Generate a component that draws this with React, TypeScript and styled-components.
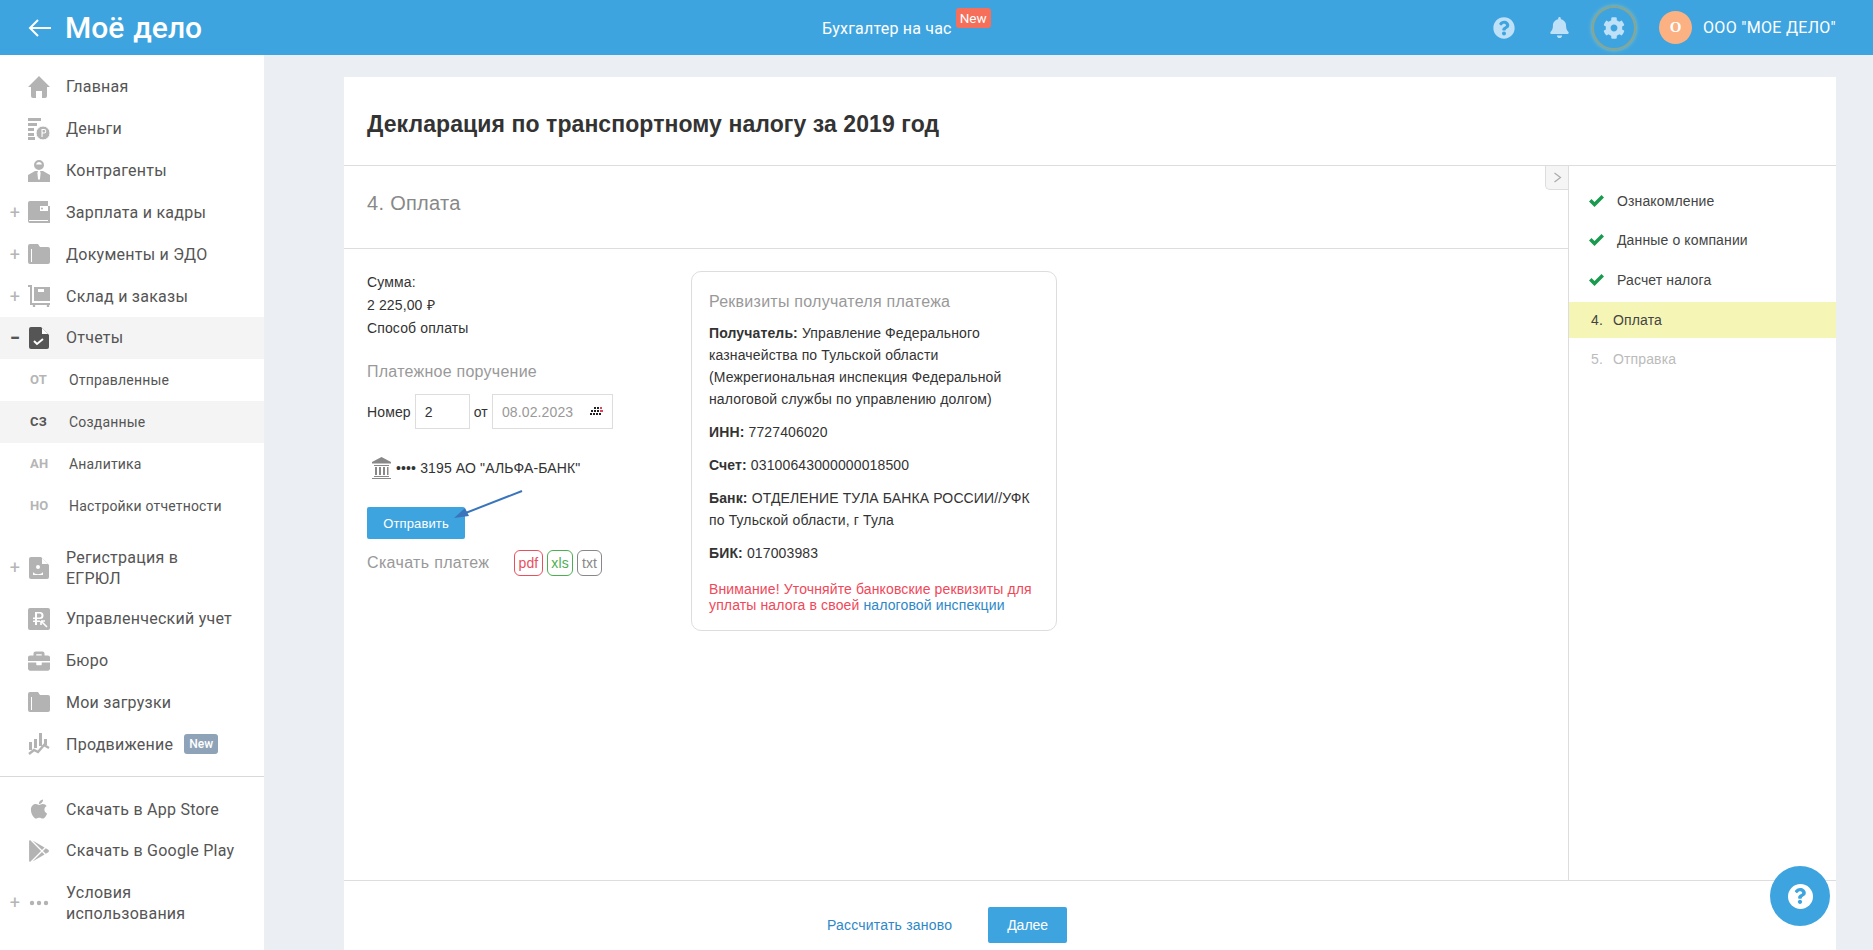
import React from 'react';
import styled, { createGlobalStyle, css } from 'styled-components';
import {
  FaApple,
  FaBell,
  FaBriefcase,
  FaCog,
  FaGooglePlay,
  FaQuestion,
  FaQuestionCircle,
} from 'react-icons/fa';

const GlobalStyle = createGlobalStyle`
  html, body {
    margin: 0;
    height: 100%;
    overflow: hidden;
    background: #ebeff3;
    font-family: 'Liberation Sans', Arial, sans-serif;
  }
`;

const Page = styled.div`
  width: 1873px;
  height: 950px;
  overflow: hidden;
  position: relative;
  display: flex;
  flex-direction: column;
`;

// шапка
const Header = styled.header`
  height: 55px;
  flex: none;
  background: #3ea4e0;
  display: flex;
  align-items: center;
  color: #fff;
  font-family: Roboto, sans-serif;
`;

const Brand = styled.div`
  width: 822px;
  flex: none;
  display: flex;
  align-items: center;
  padding-left: 28px;
  box-sizing: border-box;
  gap: 14px;
`;

const Logo = styled.span`
  font-size: 30px;
  line-height: 31px;
  font-weight: 500;
  white-space: nowrap;
`;

const LogoSmall = styled.span`
  margin-left: 9px;
`;

const Center = styled.div`
  display: flex;
  align-items: flex-start;
  gap: 4px;
  font-size: 16px;
  line-height: 19px;
  letter-spacing: 0.2px;
`;

const CenterLabel = styled.span`
  margin-top: 1px;
`;

const NewBadge = styled.span`
  background: #f56f5a;
  border-radius: 3px;
  font-size: 13.5px;
  line-height: 20px;
  padding: 0 4px;
  margin-top: -10px;
  letter-spacing: 0;
`;

const HeaderRight = styled.div`
  margin-left: auto;
  display: flex;
  align-items: center;
  padding-right: 37px;
`;

const HeaderIcon = styled.span<{ $ring?: boolean }>`
  width: 44px;
  height: 44px;
  margin-left: 11px;
  display: flex;
  align-items: center;
  justify-content: center;
  border-radius: 50%;
  box-sizing: border-box;
  color: #bfe1f7;
  font-size: 22px;
  ${(p) =>
    p.$ring &&
    css`
      border: 2px solid #8aa690;
      box-shadow: 0 0 4px rgba(240, 220, 110, 0.6);
    `}
`;

const Avatar = styled.span`
  width: 33px;
  height: 33px;
  margin-left: 23px;
  border-radius: 50%;
  background: #fbb182;
  display: flex;
  align-items: center;
  justify-content: center;
  font-family: 'Liberation Serif', serif;
  font-weight: 700;
  font-size: 15px;
`;

const CompanyName = styled.span`
  margin-left: 11px;
  font-size: 16px;
  letter-spacing: 0.3px;
  white-space: nowrap;
`;

const Body = styled.div`
  flex: 1;
  min-height: 0;
  display: flex;
`;

// боковое меню
const Sidebar = styled.nav`
  width: 264px;
  flex: none;
  background: #fff;
  padding-top: 11px;
  box-sizing: border-box;
  font-family: Roboto, sans-serif;
`;

const NavRow = styled.div<{ $active?: boolean; $tall?: boolean }>`
  min-height: 41.83px;
  display: flex;
  align-items: center;
  font-size: 16px;
  line-height: 21px;
  letter-spacing: 0.25px;
  color: #555;
  ${(p) => p.$active && 'background: #f4f4f4;'}
  ${(p) => p.$tall && 'padding: 10px 0 9px;'}
`;

const Toggle = styled.span<{ $active?: boolean }>`
  width: 28px;
  flex: none;
  text-align: center;
  padding-left: 2px;
  box-sizing: border-box;
  font-size: 18px;
  font-weight: ${(p) => (p.$active ? 900 : 400)};
  color: ${(p) => (p.$active ? '#555' : '#b5b5b5')};
`;

const NavIcon = styled.span<{ $active?: boolean }>`
  width: 22px;
  height: 22px;
  flex: none;
  margin-right: 16px;
  display: flex;
  align-items: center;
  justify-content: center;
  font-size: 22px;
  color: ${(p) => (p.$active ? '#555' : '#b3b3b3')};
  svg {
    display: block;
  }
`;

const SubRow = styled.div<{ $active?: boolean }>`
  height: 42px;
  display: flex;
  align-items: center;
  font-size: 14px;
  letter-spacing: 0.18px;
  color: #555;
  ${(p) => p.$active && 'background: #f4f4f4;'}
`;

const SubCode = styled.span<{ $active?: boolean }>`
  width: 39px;
  flex: none;
  padding-left: 30px;
  box-sizing: content-box;
  font-size: 13px;
  font-weight: 700;
  color: ${(p) => (p.$active ? '#555' : '#b5b5b5')};
`;

const SideGap = styled.div`
  height: 10px;
`;

const NavNew = styled.span`
  margin-left: 11px;
  background: #8fa3b8;
  color: #fff;
  font-size: 12px;
  font-weight: 500;
  line-height: 20px;
  letter-spacing: 0;
  padding: 0 5px;
  border-radius: 3px;
`;

const SideDivider = styled.div`
  height: 1px;
  background: #d9d9d9;
  margin: 11px 0 11px;
`;

// основная панель
const Main = styled.main`
  flex: 1;
  min-width: 0;
  padding: 22px 37px 0 80px;
`;

const Panel = styled.div`
  background: #fff;
  height: 893px;
  display: flex;
  flex-direction: column;
`;

const TitleBar = styled.div`
  height: 89px;
  flex: none;
  box-sizing: border-box;
  border-bottom: 1px solid #ddd;
  display: flex;
  align-items: center;
  padding: 6px 23px 0;
`;

const Title = styled.h1`
  margin: 0;
  font-size: 23px;
  font-weight: 700;
  letter-spacing: 0.08px;
  color: #333;
`;

const Columns = styled.div`
  flex: 1;
  min-height: 0;
  display: flex;
`;

const Wizard = styled.section`
  flex: 1;
  min-width: 0;
  position: relative;
  border-right: 1px solid #ddd;
`;

const CollapseTab = styled.span`
  position: absolute;
  top: 0;
  right: 0;
  width: 22px;
  height: 23px;
  background: #f5f5f5;
  border: 1px solid #ddd;
  border-top: 0;
  border-right: 0;
  border-radius: 0 0 0 5px;
  display: flex;
  align-items: center;
  justify-content: center;
`;

const StepHeading = styled.div`
  height: 83px;
  box-sizing: border-box;
  border-bottom: 1px solid #ddd;
  padding: 25px 0 0 23px;
  font-size: 20px;
  line-height: 24px;
  letter-spacing: 0.3px;
  color: #888;
`;

const StepBody = styled.div`
  display: flex;
  padding: 22px 0 0 23px;
  align-items: flex-start;
  position: relative;
`;

const PayColumn = styled.div`
  width: 324px;
  flex: none;
  font-size: 14px;
  letter-spacing: 0.13px;
  color: #333;
`;

const PayLine = styled.div`
  line-height: 23px;
`;

const SectionLabel = styled.div`
  margin-top: 21px;
  font-size: 16px;
  line-height: 22px;
  letter-spacing: 0.25px;
  color: #999;
`;

const NumberRow = styled.div`
  display: flex;
  align-items: center;
  margin-top: 11px;
  gap: 4px;
  font-size: 14px;
`;

const Field = styled.div<{ $width: number; $muted?: boolean }>`
  width: ${(p) => p.$width}px;
  height: 35px;
  box-sizing: border-box;
  border: 1px solid #ddd;
  display: flex;
  align-items: center;
  justify-content: space-between;
  padding: 0 9px;
  color: ${(p) => (p.$muted ? '#999' : '#333')};
`;

const BankRow = styled.div`
  display: flex;
  align-items: center;
  gap: 5px;
  margin: 27px 0 0 5px;
  height: 24px;
  color: #333;
`;

const SendButton = styled.button`
  display: block;
  margin-top: 27px;
  width: 98px;
  height: 32px;
  border: 0;
  border-radius: 2px;
  background: #3ea4e0;
  color: #fff;
  font-family: inherit;
  font-size: 13px;
  letter-spacing: 0.13px;
  padding: 0;
`;

const DownloadRow = styled.div`
  display: flex;
  align-items: center;
  margin-top: 11px;
  font-size: 16px;
  letter-spacing: 0.34px;
  color: #999;
`;

const DownloadLabel = styled.span`
  width: 147px;
`;

const FileTag = styled.span<{ $color: string }>`
  height: 26px;
  box-sizing: border-box;
  border: 1px solid ${(p) => p.$color};
  border-radius: 6px;
  padding: 0 3.5px;
  margin-right: 4px;
  font-size: 14px;
  line-height: 24px;
  letter-spacing: 0.13px;
  color: ${(p) => p.$color};
`;

const Arrow = styled.svg`
  position: absolute;
  left: 109px;
  top: 241px;
`;

const Card = styled.aside`
  width: 366px;
  height: 360px;
  flex: none;
  box-sizing: border-box;
  border: 1px solid #ddd;
  border-radius: 10px;
  padding: 19px 17px 0;
  font-size: 14px;
  letter-spacing: 0.13px;
  color: #333;
`;

const CardTitle = styled.div`
  font-size: 16px;
  line-height: 22px;
  letter-spacing: 0.25px;
  color: #999;
  margin-bottom: 9px;
`;

const CardPara = styled.p`
  margin: 0 0 11px;
  line-height: 22px;
`;

const Warning = styled.p`
  margin: 17px 0 0;
  line-height: 16px;
  color: #f0485a;
`;

const CardLink = styled.span`
  color: #2d87c8;
`;

// шаги справа
const Steps = styled.ol`
  width: 267px;
  flex: none;
  margin: 0;
  padding: 15px 0 0;
  list-style: none;
  font-size: 14px;
  letter-spacing: 0.13px;
  color: #444;
`;

const Step = styled.li<{ $done?: boolean; $current?: boolean; $future?: boolean }>`
  height: ${(p) => (p.$done ? 39.5 : 36)}px;
  display: flex;
  align-items: center;
  padding-left: ${(p) => (p.$done ? 20 : 22)}px;
  ${(p) => p.$current && 'background: #f5f5b5; margin-top: 2px;'}
  ${(p) => p.$future && 'color: #bbb; margin-top: 3px;'}
`;

const StepNumber = styled.span`
  width: 22px;
`;

const Footer = styled.footer`
  height: 90px;
  flex: none;
  box-sizing: border-box;
  border-top: 1px solid #ddd;
  display: flex;
  align-items: center;
  padding: 0 0 2px 483px;
`;

const RedoLink = styled.span`
  font-size: 14px;
  letter-spacing: 0.2px;
  color: #2d87c8;
`;

const NextButton = styled.button`
  margin-left: 36px;
  width: 79px;
  height: 36px;
  border: 0;
  border-radius: 2px;
  background: #3ea4e0;
  color: #fff;
  font-family: inherit;
  font-size: 14px;
  padding: 0;
`;

const HelpBubble = styled.div`
  position: absolute;
  left: 1770px;
  top: 866px;
  width: 60px;
  height: 60px;
  border-radius: 50%;
  background: #3ea4e0;
  display: flex;
  align-items: center;
  justify-content: center;
`;

const HelpDisc = styled.span`
  width: 25px;
  height: 25px;
  border-radius: 50%;
  background: #fff;
  color: #3ea4e0;
  display: flex;
  align-items: center;
  justify-content: center;
  font-size: 16px;
`;

const BackArrow = () => (
  <svg width="23" height="18" viewBox="0 0 23 18" fill="none" stroke="#fff" strokeWidth="2">
    <path d="M23 9H2M10 1L2 9l8 8" />
  </svg>
);

const HomeIcon = () => (
  <svg width="22" height="22" viewBox="0 0 22 22" fill="currentColor">
    <path d="M11 0l11 11h-3v9a2 2 0 0 1-2 2h-3v-7H8v7H5a2 2 0 0 1-2-2v-9H0z" />
  </svg>
);

const MoneyIcon = () => (
  <svg width="22" height="22" viewBox="0 0 22 22" fill="currentColor">
    <path d="M0 0h13v3H0zM0 5h9v3H0zM0 10h6v3H0zM0 15h6v3H0zM0 19h7v3H0z" />
    <circle cx="15" cy="15" r="7" stroke="#fff" strokeWidth="1" />
    <path d="M13.5 11h2.5a2.3 2.3 0 0 1 0 4.6h-1.4v3.4h-1.1zM14.6 12v2.6H16a1.3 1.3 0 0 0 0-2.6z" fill="#fff" />
  </svg>
);

const PersonIcon = () => (
  <svg width="22" height="22" viewBox="0 0 22 22" fill="currentColor">
    <path d="M11 0a5 5 0 0 1 5 5 5 5 0 0 1-10 0 5 5 0 0 1 5-5zm0 2a3 3 0 0 0-3 2.5h6A3 3 0 0 0 11 2z" fillRule="evenodd" />
    <path d="M7 11h8l7 4v7H0v-7z" />
    <path d="M10 11h2l.6 2-.6 6-1 1-1-1-.6-6z" fill="#fff" />
  </svg>
);

const WalletIcon = () => (
  <svg width="22" height="22" viewBox="0 0 22 22" fill="currentColor">
    <path d="M2 0h18v5h2v17H2a2 2 0 0 1-2-2V2a2 2 0 0 1 2-2z" />
    <path d="M1 19h19v1H1z" fill="#fff" />
    <path d="M12 5h8v5h-8z" fill="#fff" />
    <circle cx="14" cy="7.5" r="1" />
  </svg>
);

const FolderIcon = () => (
  <svg width="22" height="20" viewBox="0 0 22 20" fill="currentColor">
    <path d="M2 0h8l2 3h8a2 2 0 0 1 2 2v13a2 2 0 0 1-2 2H2a2 2 0 0 1-2-2V2a2 2 0 0 1 2-2z" />
    <path d="M3 5h1v13H3z" fill="#fff" />
  </svg>
);

const CartIcon = () => (
  <svg width="22" height="22" viewBox="0 0 22 22" fill="currentColor">
    <path d="M0 0h4v18h18v2H2V2H0z" />
    <path d="M6 2h16v14H6z" />
    <path d="M10 4h6v3h-6z" fill="#fff" />
    <circle cx="6" cy="21" r="1.3" />
    <circle cx="20" cy="21" r="1.3" />
  </svg>
);

const ReportIcon = () => (
  <svg width="20" height="22" viewBox="0 0 20 22" fill="currentColor">
    <path d="M2 0h10l8 8v12a2 2 0 0 1-2 2H2a2 2 0 0 1-2-2V2a2 2 0 0 1 2-2z" />
    <path d="M13 1l6 6h-6z" fill="#fff" />
    <path d="M5 14l3 3 6-5" fill="none" stroke="#fff" strokeWidth="2" />
  </svg>
);

const RegistrationIcon = () => (
  <svg width="20" height="22" viewBox="0 0 20 22" fill="currentColor">
    <path d="M2 0h10l8 8v12a2 2 0 0 1-2 2H2a2 2 0 0 1-2-2V2a2 2 0 0 1 2-2z" />
    <path d="M13 1l6 6h-6z" fill="#fff" />
    <circle cx="9" cy="10" r="2" fill="#fff" />
    <path d="M4 15c2 3 8 3 10 0v3H4z" fill="#fff" />
  </svg>
);

const RubleTileIcon = () => (
  <svg width="22" height="22" viewBox="0 0 22 22" fill="currentColor">
    <rect width="22" height="22" rx="2" />
    <path d="M7 4h5a3.5 3.5 0 0 1 0 7H9v1.5h3V14H9v3H7v-3H5v-1.5h2V11H5V9.5h2zm2 1.6v3.9h3a2 2 0 0 0 0-3.9z" fill="#fff" />
    <path d="M13 13l6 6M13 13v4M13 13h4" stroke="#fff" strokeWidth="1.6" fill="none" />
  </svg>
);

const ChartIcon = () => (
  <svg width="22" height="22" viewBox="0 0 22 22" fill="currentColor">
    <path d="M1 9h3v8H1zM6 6h3v9H6zM11 0h3v13h-3zM16 6h3v6h-3z" />
    <path d="M1 21l5-4 4 2 6-7 5 3" fill="none" stroke="currentColor" strokeWidth="2.4" />
  </svg>
);

const DotsIcon = () => (
  <svg width="22" height="6" viewBox="0 0 22 6" fill="currentColor">
    <circle cx="4" cy="3" r="2.2" />
    <circle cx="11" cy="3" r="2.2" />
    <circle cx="18" cy="3" r="2.2" />
  </svg>
);

const BankGlyph = () => (
  <svg width="19" height="22" viewBox="0 0 19 22" fill="#888">
    <path d="M9.5 0L19 5v1.5H0V5z" />
    <path d="M2 8h15v1H2zM3 10h2v8H3zM7 10h2v8H7zM11 10h2v8h-2zM15 10h1.500v8H15zM2 19h15v1H2zM0 21h19v1H0z" />
  </svg>
);

const CheckGlyph = () => (
  <svg width="15" height="12" viewBox="0 0 15 12" fill="#1a9a50" style={{ marginRight: 13 }}>
    <path d="M0 6.500L2.500 4l3 3L12.500 0 15 2.500 5.500 12z" />
  </svg>
);

const CalendarGlyph = () => (
  <svg width="13" height="9" viewBox="0 0 13 9">
    <path d="M4 0h2v2H4zM7 0h2v2H7zM1 3h2v2H1zM4 3h2v2H4zM7 3h2v2H7zM0 6h2v2H0zM3 6h2v2H3zM6 6h2v2H6zM9 6h2v2H9z" fill="#222" />
    <path d="M10 0h2v2h-2zM10 3h3v2h-3z" fill="#e0445a" />
  </svg>
);

const Chevron = () => (
  <svg width="9" height="11" viewBox="0 0 9 11" fill="none" stroke="#aaa" strokeWidth="1.2">
    <path d="M1.500 1l6 4.500-6 4.500" />
  </svg>
);

type NavItem = {
  label: React.ReactNode;
  icon: React.ReactNode;
  toggle?: string;
  active?: boolean;
  tall?: boolean;
};

const topNav: NavItem[] = [
  { label: 'Главная', icon: <HomeIcon /> },
  { label: 'Деньги', icon: <MoneyIcon /> },
  { label: 'Контрагенты', icon: <PersonIcon /> },
  { label: 'Зарплата и кадры', icon: <WalletIcon />, toggle: '+' },
  { label: 'Документы и ЭДО', icon: <FolderIcon />, toggle: '+' },
  { label: 'Склад и заказы', icon: <CartIcon />, toggle: '+' },
  { label: 'Отчеты', icon: <ReportIcon />, toggle: '−', active: true },
];

const subNav = [
  { code: 'ОТ', label: 'Отправленные' },
  { code: 'СЗ', label: 'Созданные', active: true },
  { code: 'АН', label: 'Аналитика' },
  { code: 'НО', label: 'Настройки отчетности' },
];

const middleNav: NavItem[] = [
  { label: 'Управленческий учет', icon: <RubleTileIcon /> },
  { label: 'Бюро', icon: <FaBriefcase /> },
  { label: 'Мои загрузки', icon: <FolderIcon /> },
  {
    label: (
      <>
        Продвижение<NavNew>New</NavNew>
      </>
    ),
    icon: <ChartIcon />,
  },
];

const bottomNav: NavItem[] = [
  { label: 'Скачать в App Store', icon: <FaApple /> },
  { label: 'Скачать в Google Play', icon: <FaGooglePlay /> },
  {
    label: (
      <span>
        Условия
        <br />
        использования
      </span>
    ),
    icon: <DotsIcon />,
    toggle: '+',
    tall: true,
  },
];

const renderNav = (item: NavItem, key: number) => (
  <NavRow key={key} $active={item.active} $tall={item.tall}>
    <Toggle $active={item.active}>{item.toggle}</Toggle>
    <NavIcon $active={item.active}>{item.icon}</NavIcon>
    {item.label}
  </NavRow>
);

const App: React.FC = () => {
  return (
    <Page>
      <GlobalStyle />
      <Header>
        <Brand>
          <BackArrow />
          <Logo>
            Моё<LogoSmall>дело</LogoSmall>
          </Logo>
        </Brand>
        <Center>
          <CenterLabel>Бухгалтер на час</CenterLabel>
          <NewBadge>New</NewBadge>
        </Center>
        <HeaderRight>
          <HeaderIcon>
            <FaQuestionCircle />
          </HeaderIcon>
          <HeaderIcon>
            <FaBell size={21} />
          </HeaderIcon>
          <HeaderIcon $ring>
            <FaCog />
          </HeaderIcon>
          <Avatar>О</Avatar>
          <CompanyName>ООО "МОЕ ДЕЛО"</CompanyName>
        </HeaderRight>
      </Header>
      <Body>
        <Sidebar>
          {topNav.map(renderNav)}
          {subNav.map((s) => (
            <SubRow key={s.code} $active={s.active}>
              <SubCode $active={s.active}>{s.code}</SubCode>
              {s.label}
            </SubRow>
          ))}
          <SideGap />
          <NavRow $tall>
            <Toggle>+</Toggle>
            <NavIcon>
              <RegistrationIcon />
            </NavIcon>
            <span>
              Регистрация в
              <br />
              ЕГРЮЛ
            </span>
          </NavRow>
          {middleNav.map(renderNav)}
          <SideDivider />
          {bottomNav.map(renderNav)}
        </Sidebar>
        <Main>
          <Panel>
            <TitleBar>
              <Title>Декларация по транспортному налогу за 2019 год</Title>
            </TitleBar>
            <Columns>
              <Wizard>
                <CollapseTab>
                  <Chevron />
                </CollapseTab>
                <StepHeading>4. Оплата</StepHeading>
                <StepBody>
                  <PayColumn>
                    <PayLine>Сумма:</PayLine>
                    <PayLine>2 225,00 ₽</PayLine>
                    <PayLine>Способ оплаты</PayLine>
                    <SectionLabel>Платежное поручение</SectionLabel>
                    <NumberRow>
                      Номер
                      <Field $width={55}>2</Field>
                      от
                      <Field $width={121} $muted>
                        08.02.2023
                        <CalendarGlyph />
                      </Field>
                    </NumberRow>
                    <BankRow>
                      <BankGlyph />
                      •••• 3195 АО "АЛЬФА-БАНК"
                    </BankRow>
                    <SendButton>Отправить</SendButton>
                    <DownloadRow>
                      <DownloadLabel>Скачать платеж</DownloadLabel>
                      <FileTag $color="#e8505f">pdf</FileTag>
                      <FileTag $color="#4caf50">xls</FileTag>
                      <FileTag $color="#888">txt</FileTag>
                    </DownloadRow>
                  </PayColumn>
                  <Card>
                    <CardTitle>Реквизиты получателя платежа</CardTitle>
                    <CardPara>
                      <b>Получатель:</b> Управление Федерального казначейства по Тульской области
                      (Межрегиональная инспекция Федеральной налоговой службы по управлению долгом)
                    </CardPara>
                    <CardPara>
                      <b>ИНН:</b> 7727406020
                    </CardPara>
                    <CardPara>
                      <b>Счет:</b> 03100643000000018500
                    </CardPara>
                    <CardPara>
                      <b>Банк:</b> ОТДЕЛЕНИЕ ТУЛА БАНКА РОССИИ//УФК по Тульской области, г Тула
                    </CardPara>
                    <CardPara>
                      <b>БИК:</b> 017003983
                    </CardPara>
                    <Warning>
                      Внимание! Уточняйте банковские реквизиты для уплаты налога в своей{' '}
                      <CardLink>налоговой инспекции</CardLink>
                    </Warning>
                  </Card>
                  <Arrow width="72" height="32" viewBox="0 0 72 32">
                    <path d="M69 1L10 24" stroke="#3a75bc" strokeWidth="2" fill="none" />
                    <path d="M1 28l11-10 4 8z" fill="#3a75bc" />
                  </Arrow>
                </StepBody>
              </Wizard>
              <Steps>
                <Step $done>
                  <CheckGlyph />
                  Ознакомление
                </Step>
                <Step $done>
                  <CheckGlyph />
                  Данные о компании
                </Step>
                <Step $done>
                  <CheckGlyph />
                  Расчет налога
                </Step>
                <Step $current>
                  <StepNumber>4.</StepNumber>
                  Оплата
                </Step>
                <Step $future>
                  <StepNumber>5.</StepNumber>
                  Отправка
                </Step>
              </Steps>
            </Columns>
            <Footer>
              <RedoLink>Рассчитать заново</RedoLink>
              <NextButton>Далее</NextButton>
            </Footer>
          </Panel>
        </Main>
      </Body>
      <HelpBubble>
        <HelpDisc>
          <FaQuestion />
        </HelpDisc>
      </HelpBubble>
    </Page>
  );
};

export default App;
